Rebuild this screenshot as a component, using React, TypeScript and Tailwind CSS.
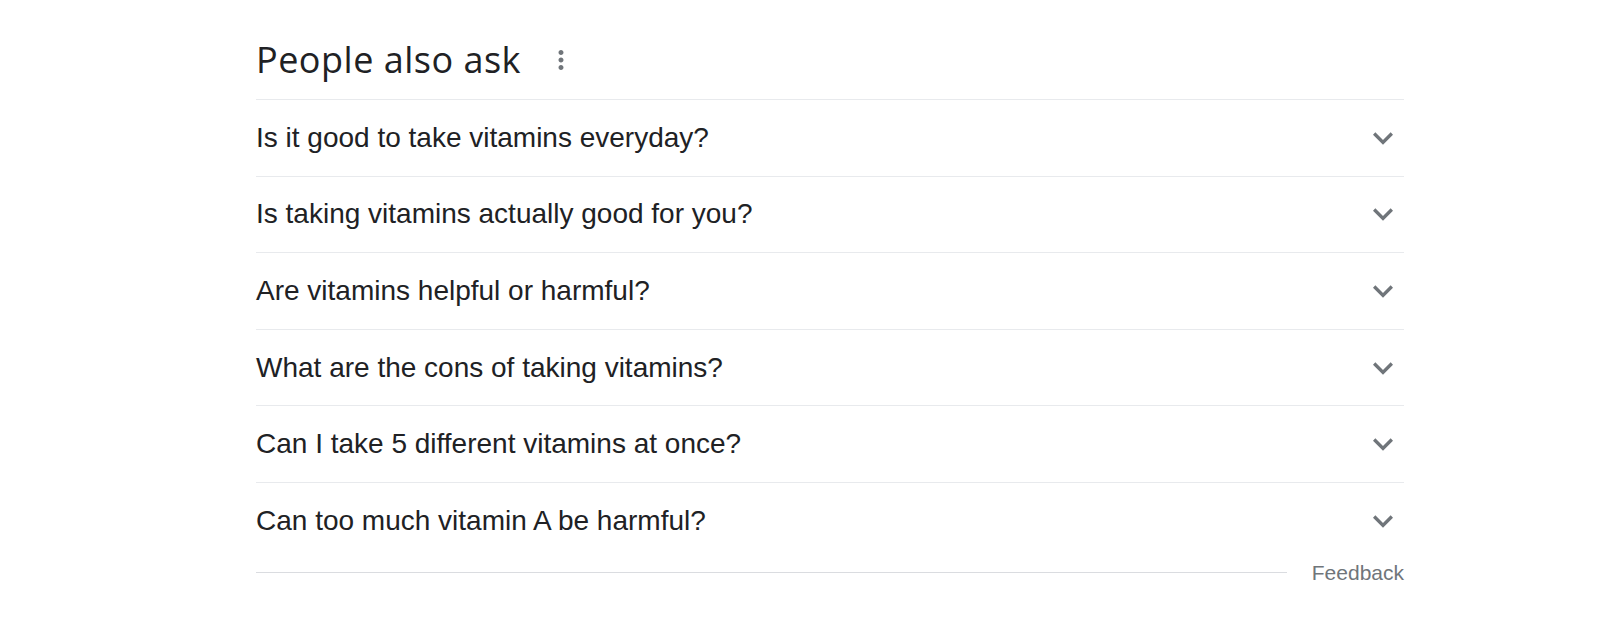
const QUESTIONS = [
  'Is it good to take vitamins everyday?',
  'Is taking vitamins actually good for you?',
  'Are vitamins helpful or harmful?',
  'What are the cons of taking vitamins?',
  'Can I take 5 different vitamins at once?',
  'Can too much vitamin A be harmful?',
];

function ChevronDown() {
  return (
    <svg viewBox="0 0 24 24" className="w-[40px] h-[40px] shrink-0" fill="#70757a">
      <path d="M16.59 8.59L12 13.17 7.41 8.59 6 10l6 6 6-6z" />
    </svg>
  );
}

function MoreVert() {
  return (
    <svg viewBox="0 0 24 24" className="w-[30px] h-[30px]" fill="#70757a">
      <path d="M12 8c1.1 0 2-.9 2-2s-.9-2-2-2-2 .9-2 2 .9 2 2 2zm0 2c-1.1 0-2 .9-2 2s.9 2 2 2 2-.9 2-2-.9-2-2-2zm0 6c-1.1 0-2 .9-2 2s.9 2 2 2 2-.9 2-2-.9-2-2-2z" />
    </svg>
  );
}

export default function App() {
  return (
    <div className="min-h-screen bg-white font-['Liberation_Sans',Arial,sans-serif]">
      <div className="ml-[256px] w-[1148px] pt-[38px]">
        {/* Header */}
        <div className="flex items-center gap-[25px] pb-[17px] border-b border-[#e8eaed]">
          <h2 className="font-['Open_Sans',sans-serif] text-[36px] leading-[44px] tracking-[0.5px] text-[#202124]">
            People also ask
          </h2>
          <MoreVert />
        </div>

        {/* Questions */}
        {QUESTIONS.map((q, i) => (
          <div
            key={q}
            className={`flex items-center justify-between h-[76.6px] pr-px ${
              i < QUESTIONS.length - 1 ? 'border-b border-[#e8eaed]' : ''
            }`}
          >
            <span className="text-[28px] text-[#202124]">{q}</span>
            <ChevronDown />
          </div>
        ))}

        {/* Footer */}
        <div className="flex items-center gap-[25px] h-[25px]">
          <div className="flex-1 h-px bg-[#dadce0]" />
          <span className="text-[21px] text-[#70757a] leading-none">Feedback</span>
        </div>
      </div>
    </div>
  );
}
